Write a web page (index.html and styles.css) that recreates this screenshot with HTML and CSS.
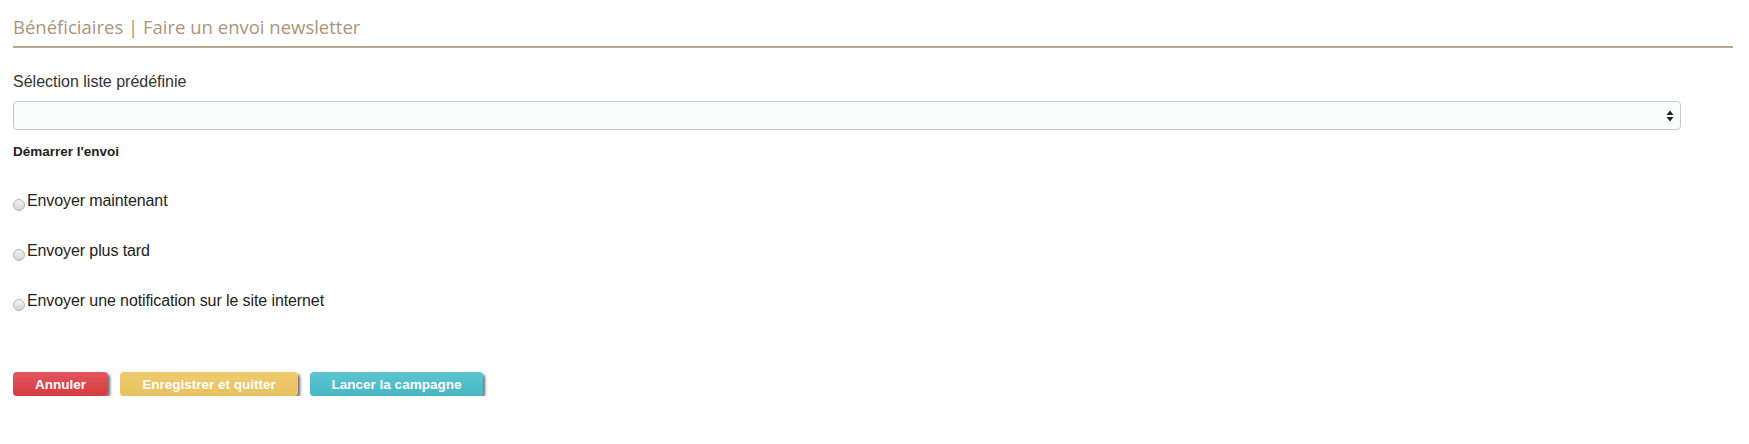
FILE: index.html
```html
<!DOCTYPE html>
<html lang="fr">
<head>
<meta charset="utf-8">
<title>Bénéficiaires | Faire un envoi newsletter</title>
<link rel="stylesheet" href="styles.css">
</head>
<body>
<div class="page">
  <h1 class="title">Bénéficiaires | Faire un envoi newsletter</h1>
  <div class="field">
    <label class="label">Sélection liste prédéfinie</label>
    <div class="select">
      <svg class="arrows" width="8" height="12" viewBox="0 0 8 12"><path d="M4 0.5 L7.5 5 L0.5 5 Z M4 11.5 L7.5 7 L0.5 7 Z" fill="#222"/></svg>
    </div>
  </div>
  <div class="section">Démarrer l'envoi</div>
  <div class="radios">
    <div class="radio-row"><span class="radio"></span><span class="radio-text">Envoyer maintenant</span></div>
    <div class="radio-row"><span class="radio"></span><span class="radio-text">Envoyer plus tard</span></div>
    <div class="radio-row"><span class="radio"></span><span class="radio-text">Envoyer une notification sur le site internet</span></div>
  </div>
  <div class="actions">
    <button class="btn btn-red">Annuler</button>
    <button class="btn btn-yellow">Enregistrer et quitter</button>
    <button class="btn btn-teal">Lancer la campagne</button>
  </div>
</div>
</body>
</html>
```
FILE: styles.css
```css
html, body { margin: 0; padding: 0; background: #fff; }
body { font-family: "Liberation Sans", Arial, sans-serif; color: #333; }
.page { padding: 0 16px 0 13px; }
.title {
  margin: 0;
  padding-top: 15px;
  height: 31px;
  font-family: "Open Sans", "DejaVu Sans", sans-serif;
  font-weight: 400;
  font-size: 18.5px;
  line-height: 24px;
  color: #ab9479;
  border-bottom: 2px solid #bba78e;
}
.field { margin-top: 24px; }
.label { display: block; font-size: 16px; line-height: 20px; height: 20px; color: #333; }
.select {
  margin-top: 9px;
  width: 97%;
  height: 29px;
  box-sizing: border-box;
  border: 1px solid #c9c9c9;
  border-radius: 4px;
  background: #fafbfb;
  display: flex;
  align-items: center;
  justify-content: flex-end;
  padding-right: 6px;
}
.section { margin-top: 14px; font-size: 13.5px; font-weight: 700; line-height: 16px; color: #222; }
.radios { margin-top: 31px; display: flex; flex-direction: column; gap: 30px; }
.radio-row { display: flex; align-items: flex-end; height: 20px; }
.radio {
  width: 12px; height: 12px; box-sizing: border-box;
  border-radius: 50%;
  border: 1px solid #b5b5b5;
  background: linear-gradient(#f2f2f2, #d4d4d4);
  margin-bottom: 0;
}
.radio-text { font-size: 16px; line-height: 20px; color: #222; margin-left: 2px; letter-spacing: -0.1px; }
.actions { margin-top: 61px; display: flex; gap: 12px; }
.btn {
  height: 24px;
  border: none;
  border-radius: 4px;
  padding: 0;
  font-family: "Liberation Sans", Arial, sans-serif;
  font-weight: 700;
  font-size: 13.5px;
  color: #fff;
  box-shadow: 2px 2px 3px rgba(40,40,40,0.7);
}
.btn-red { background: linear-gradient(#e4555c, #d43c42); width: 95px; }
.btn-yellow { background: linear-gradient(#eecb6e, #e8c160); width: 178px; }
.btn-teal { background: linear-gradient(#5cc5d0, #47b6c3); width: 173px; }
```
